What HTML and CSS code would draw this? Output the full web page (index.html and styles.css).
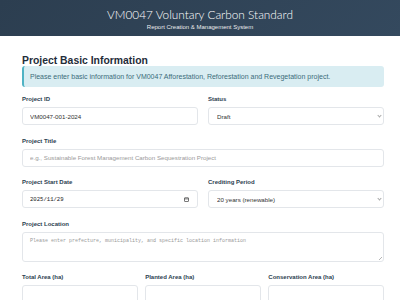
FILE: index.html
```html
<!DOCTYPE html>
<html lang="en">
<head>
  <meta charset="UTF-8">
  <title>VM0047 Voluntary Carbon Standard</title>
  <link rel="stylesheet" href="styles.css">
</head>
<body>
  <header class="app-header">
    <h1>VM0047 Voluntary Carbon Standard</h1>
    <p>Report Creation &amp; Management System</p>
  </header>

  <main class="content">
    <h2 class="section-title">Project Basic Information</h2>

    <div class="alert">
      Please enter basic information for VM0047 Afforestation, Reforestation and Revegetation project.
    </div>

    <div class="row two-col">
      <div class="field">
        <label for="projectId">Project ID</label>
        <input id="projectId" type="text" value="VM0047-001-2024">
      </div>
      <div class="field">
        <label for="status">Status</label>
        <div class="select-wrap">
          <select id="status">
            <option>Draft</option>
            <option>Under Review</option>
            <option>Submitted</option>
          </select>
        </div>
      </div>
    </div>

    <div class="field">
      <label for="projectTitle">Project Title</label>
      <input id="projectTitle" type="text" placeholder="e.g., Sustainable Forest Management Carbon Sequestration Project">
    </div>

    <div class="row two-col">
      <div class="field">
        <label for="startDate">Project Start Date</label>
        <div class="date-input">
          <input id="startDate" type="text" value="2025/11/29">
          <svg viewBox="0 0 10 10" width="5" height="5" fill="none" stroke="#222" stroke-width="1.2">
            <rect x="1" y="1.5" width="8" height="7.5" rx="0.8"/>
            <path d="M1 3.8h8"/>
          </svg>
        </div>
      </div>
      <div class="field">
        <label for="creditingPeriod">Crediting Period</label>
        <div class="select-wrap">
          <select id="creditingPeriod">
            <option>20 years (renewable)</option>
            <option>30 years (fixed)</option>
          </select>
        </div>
      </div>
    </div>

    <div class="field">
      <label for="location">Project Location</label>
      <div class="textarea-wrap">
        <textarea id="location" placeholder="Please enter prefecture, municipality, and specific location information"></textarea>
      </div>
    </div>

    <div class="row three-col">
      <div class="field">
        <label for="totalArea">Total Area (ha)</label>
        <input id="totalArea" type="number">
      </div>
      <div class="field">
        <label for="plantedArea">Planted Area (ha)</label>
        <input id="plantedArea" type="number">
      </div>
      <div class="field">
        <label for="conservationArea">Conservation Area (ha)</label>
        <input id="conservationArea" type="number">
      </div>
    </div>
  </main>
</body>
</html>
```

FILE: styles.css
```css
html, body {
  overflow: hidden;
}

body {
  margin: 0;
  font-family: "Liberation Sans", Arial, sans-serif;
  font-size: 6.4px;
  color: #333;
  background-color: #fff;
}

.app-header {
  height: 36px;
  box-sizing: border-box;
  padding-top: 7px;
  background: linear-gradient(135deg, #2c3e50, #34495e);
  color: white;
  text-align: center;
}

.app-header h1 {
  margin: 0;
  font-family: Lato, "Liberation Sans", sans-serif;
  font-size: 11.8px;
  font-weight: 300;
  line-height: 15.6px;
}

.app-header p {
  margin: 1px 0 0;
  font-size: 6px;
  line-height: 6.7px;
  opacity: 0.9;
}

.content {
  padding: 0 16px 0 22px;
}

.section-title {
  margin: 20px 0 0;
  font-size: 10.4px;
  line-height: 10px;
  color: #1f2d3a;
}

.alert {
  margin-bottom: 9px;
  padding: 7px 6px;
  border-left: 2px solid #4fb3c4;
  border-radius: 3px;
  background-color: #d9edf2;
  color: #3c6c7a;
  font-size: 7px;
  line-height: 7px;
}

.row {
  display: grid;
}

.two-col {
  grid-template-columns: 1fr 1fr;
  gap: 10px;
}

.three-col {
  grid-template-columns: 1fr 1fr 1fr;
  gap: 7.5px;
}

.field {
  margin-bottom: 12.5px;
}

.field label {
  display: block;
  margin-bottom: 4px;
  font-size: 6px;
  line-height: 7px;
  font-weight: bold;
  color: #2c3e50;
}

input,
select,
textarea,
.date-input {
  display: block;
  width: 100%;
  box-sizing: border-box;
  margin: 0;
  border: 1px solid #e3e6ea;
  border-radius: 3px;
  background-color: #fff;
  color: #333;
  font-family: "Liberation Sans", Arial, sans-serif;
  font-size: 6.2px;
  outline: none;
}

input,
select {
  height: 18px;
  padding: 0 7px;
}

input::placeholder,
textarea::placeholder {
  color: #9a9a9a;
}

.select-wrap,
.textarea-wrap {
  position: relative;
}

select {
  appearance: none;
  -webkit-appearance: none;
  padding: 0 8px;
}

.select-wrap::after {
  content: "";
  position: absolute;
  right: 3px;
  top: 7px;
  width: 2px;
  height: 2px;
  border-right: 1px solid #aaa;
  border-bottom: 1px solid #aaa;
  transform: rotate(45deg);
}

.date-input {
  display: flex;
  align-items: center;
  height: 18px;
  padding: 0 8px 0 7px;
}

.date-input input {
  flex: 1;
  height: 16px;
  padding: 0;
  border: none;
  font-family: "Liberation Mono", monospace;
  font-size: 5.6px;
  color: #222;
}

textarea {
  height: 30px;
  padding: 5px 7px;
  font-family: "Liberation Mono", monospace;
  font-size: 5px;
  resize: none;
}

.textarea-wrap::after {
  content: "";
  position: absolute;
  right: 2px;
  bottom: 2px;
  width: 3px;
  height: 3px;
  background: linear-gradient(135deg, transparent 45%, #b5b5b5 45%, #b5b5b5 60%, transparent 60%);
}
```
